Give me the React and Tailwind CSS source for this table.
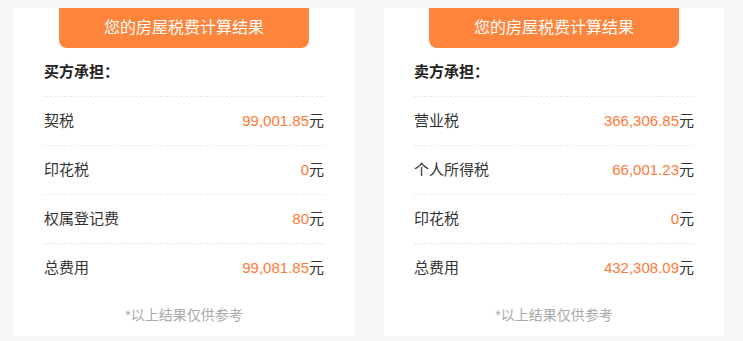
const buyer = [
  { name: '契税', value: '99,001.85' },
  { name: '印花税', value: '0' },
  { name: '权属登记费', value: '80' },
  { name: '总费用', value: '99,081.85' },
]

const seller = [
  { name: '营业税', value: '366,306.85' },
  { name: '个人所得税', value: '66,001.23' },
  { name: '印花税', value: '0' },
  { name: '总费用', value: '432,308.09' },
]

function ResultCard({ title, rows }) {
  return (
    <div className="w-[340px] h-[328px] bg-white flex flex-col">
      <div className="mx-auto w-[250px] h-10 bg-[#ff853d] rounded-b-lg flex items-center justify-center text-white text-[16px]">
        您的房屋税费计算结果
      </div>
      <div className="px-[30px]">
        <div className="h-[49px] flex items-center border-b border-dashed border-[#eaeaea] text-[15px] font-bold text-[#222]">
          {title}
        </div>
        {rows.map((row, i) => (
          <div
            key={row.name}
            className={
              'h-[49px] flex items-center justify-between text-[15px] text-[#333] ' +
              (i < rows.length - 1 ? 'border-b border-dashed border-[#eaeaea]' : '')
            }
          >
            <span>{row.name}</span>
            <span>
              <span className="text-[#ff7a35]">{row.value}</span>元
            </span>
          </div>
        ))}
      </div>
      <div className="mt-3 leading-5 text-center text-[14px] text-[#aaa]">*以上结果仅供参考</div>
    </div>
  )
}

export default function App() {
  return (
    <div
      className="w-[743px] h-[341px] bg-[#f7f7f7] pt-2 pl-[14px] flex gap-[30px]"
      style={{ fontFamily: '"Liberation Sans", "Noto Sans CJK SC", sans-serif' }}
    >
      <ResultCard title="买方承担：" rows={buyer} />
      <ResultCard title="卖方承担：" rows={seller} />
    </div>
  )
}
